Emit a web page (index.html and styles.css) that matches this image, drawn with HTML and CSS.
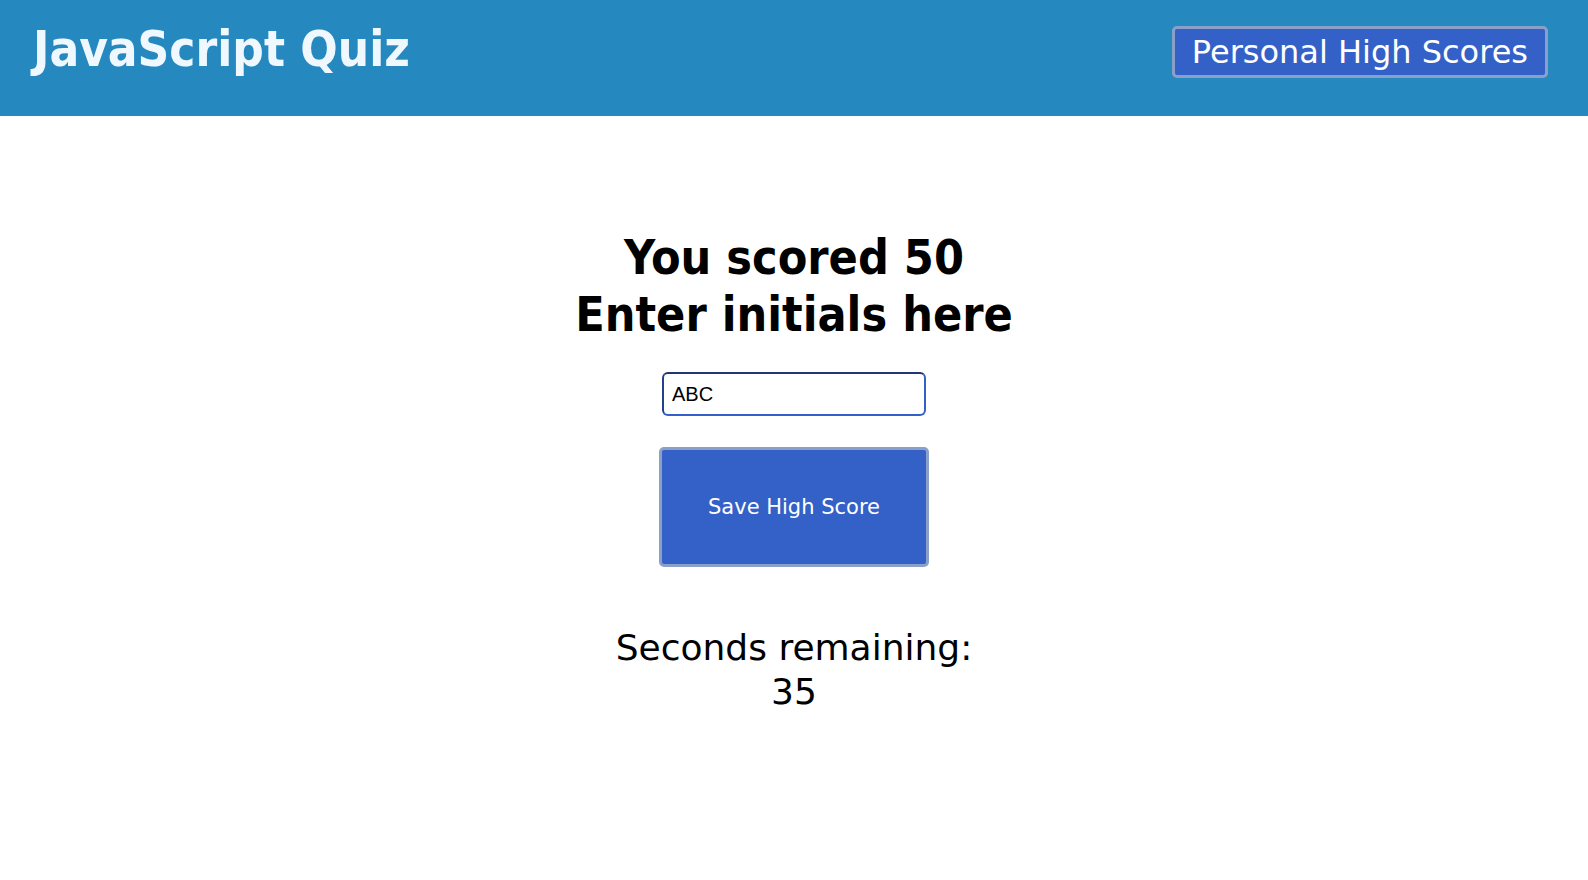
FILE: index.html
```html
<!DOCTYPE html>
<html lang="en">
<head>
<meta charset="utf-8">
<title>JavaScript Quiz</title>
<link rel="stylesheet" href="styles.css">
</head>
<body>
<header class="top-bar">
  <h1 class="brand">JavaScript Quiz</h1>
  <button class="scores-btn" type="button">Personal High Scores</button>
</header>
<main class="content">
  <h2 class="result">You scored 50<br>Enter initials here</h2>
  <input class="initials" type="text" value="ABC">
  <button class="save-btn" type="button">Save High Score</button>
  <p class="timer">Seconds remaining:<br>35</p>
</main>
</body>
</html>
```
FILE: styles.css
```css
html, body {
  margin: 0;
  padding: 0;
  background: #ffffff;
}
body {
  font-family: "DejaVu Sans", Verdana, sans-serif;
  color: #000;
}
.top-bar {
  height: 116px;
  background: #2589bf;
  display: flex;
  align-items: flex-start;
  justify-content: space-between;
  padding: 0 40px 0 33px;
  box-sizing: border-box;
}
.brand {
  margin: 21px 0 0;
  font-family: "DejaVu Sans Condensed", "DejaVu Sans", sans-serif;
  font-size: 49px;
  font-weight: bold;
  color: #f0f8ff;
}
.scores-btn {
  margin-top: 26px;
  height: 52px;
  padding: 0 17px;
  background: #3461c8;
  border: 3px solid #8aa0c8;
  border-radius: 5px;
  color: #ffffff;
  font-family: "DejaVu Sans", Verdana, sans-serif;
  font-size: 32px;
}
.content {
  display: flex;
  flex-direction: column;
  align-items: center;
  padding-top: 113px;
}
.result {
  margin: 0;
  font-family: "DejaVu Sans Condensed", "DejaVu Sans", sans-serif;
  font-size: 48px;
  font-weight: bold;
  line-height: 57px;
  text-align: center;
}
.initials {
  margin-top: 29px;
  width: 264px;
  height: 44px;
  box-sizing: border-box;
  border: 2px solid #3461c8;
  border-top-color: #1f3575;
  border-left-color: #24408a;
  border-radius: 6px;
  padding: 0 8px;
  font-family: "Liberation Sans", Arial, sans-serif;
  font-size: 20px;
  color: #000;
  outline: none;
}
.save-btn {
  margin-top: 31px;
  width: 270px;
  height: 120px;
  background: #3461c8;
  border: 3px solid #8aa0c8;
  border-radius: 5px;
  color: #ffffff;
  font-family: "DejaVu Sans", Verdana, sans-serif;
  font-size: 21px;
}
.timer {
  margin: 59px 0 0;
  font-size: 36px;
  line-height: 44px;
  text-align: center;
}
```
